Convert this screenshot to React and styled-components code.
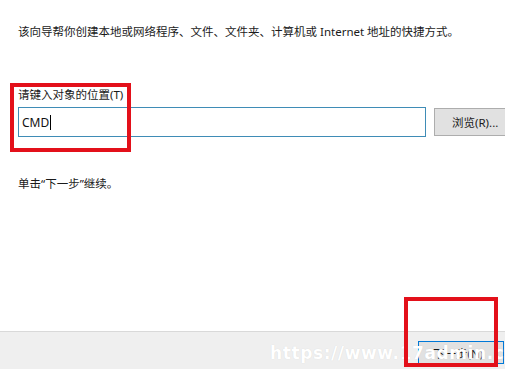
import styled, { createGlobalStyle } from 'styled-components';

const GlobalStyle = createGlobalStyle`
    html, body {
        margin: 0;
        padding: 0;
        background: #ffffff;
    }
    body {
        font-family: "Noto Sans", "Noto Sans CJK SC", sans-serif;
        font-size: 11.5px;
        color: #1a1a1a;
    }
`;

const Page = styled.div`
    position: relative;
    width: 505px;
    height: 369px;
    overflow: hidden;
    display: flex;
    flex-direction: column;
`;

const Content = styled.div`
    flex: 1;
    padding: 24px 0 0 18px;
    display: flex;
    flex-direction: column;
`;

const Text = styled.div`
    line-height: 16px;
    white-space: nowrap;
    margin-bottom: ${(p) => p.$gap || 0}px;
`;

const Row = styled.div`
    display: flex;
    align-items: center;
    gap: 8px;
    margin-top: 4px;
    margin-bottom: 39px;
`;

const TextBox = styled.div`
    box-sizing: border-box;
    flex: none;
    width: 408px;
    height: 30px;
    border: 1px solid #3f8cb6;
    display: flex;
    align-items: center;
    padding-left: 3px;
    font-size: 12px;
    color: #111;
`;

const Caret = styled.span`
    display: inline-block;
    width: 1px;
    height: 15px;
    margin-left: 1px;
    background: #000;
`;

const Button = styled.button`
    box-sizing: border-box;
    flex: none;
    width: ${(p) => p.$width}px;
    height: ${(p) => p.$height}px;
    background: #e1e1e1;
    border: 1px solid ${(p) => (p.$default ? '#0078d7' : '#adadad')};
    font-family: "Noto Sans", "Noto Sans CJK SC", sans-serif;
    font-size: 11.5px;
    color: #1a1a1a;
    text-align: left;
    padding: 0 0 0 ${(p) => p.$pad}px;
    margin: 0;
    white-space: nowrap;
`;

const Footer = styled.div`
    height: 38px;
    box-sizing: border-box;
    background: #efefef;
    border-top: 1px solid #d9d9d9;
    display: flex;
    justify-content: flex-start;
    padding: 9px 0 0 418px;
`;

const Highlight = styled.div`
    position: absolute;
    box-sizing: border-box;
    left: ${(p) => p.$x}px;
    top: ${(p) => p.$y}px;
    width: ${(p) => p.$w}px;
    height: ${(p) => p.$h}px;
    border: 4px solid #e3101a;
    pointer-events: none;
`;

const Watermark = styled.div`
    position: absolute;
    left: 270px;
    top: 343px;
    font-family: "DejaVu Sans", sans-serif;
    font-weight: bold;
    font-size: 17px;
    letter-spacing: 0.6px;
    color: #ffffff;
    text-shadow: 0 0 1px rgba(0, 0, 0, 0.12);
    white-space: nowrap;
    pointer-events: none;
`;

const App = () => {
    return (
        <>
            <GlobalStyle />
            <Page>
                <Content>
                    <Text $gap={47}>
                        该向导帮你创建本地或网络程序、文件、文件夹、计算机或 Internet 地址的快捷方式。
                    </Text>
                    <Text>请键入对象的位置(T)</Text>
                    <Row>
                        <TextBox>
                            CMD<Caret />
                        </TextBox>
                        <Button $width={82} $height={28} $pad={17}>浏览(R)...</Button>
                    </Row>
                    <Text>单击“下一步”继续。</Text>
                </Content>
                <Footer>
                    <Button $default $width={86} $height={23} $pad={14}>下一步(N)</Button>
                </Footer>
                <Watermark>https://www.17admin.cc</Watermark>
                <Highlight $x={10} $y={83} $w={121} $h={69} />
                <Highlight $x={404} $y={297} $w={94} $h={70} />
            </Page>
        </>
    );
};

export default App;
